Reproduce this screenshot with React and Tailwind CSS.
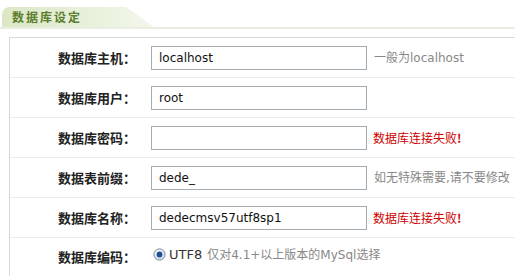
import React from "react";

const cjk = "font-['Noto_Sans_CJK_SC','Noto_Sans',sans-serif]";
const latin = "font-['DejaVu_Sans','Noto_Sans_CJK_SC',sans-serif]";

function Label({ children }) {
  return (
    <div className={`w-[141px] shrink-0 text-right pr-[15px] text-[13px] font-bold text-[#222] ${cjk}`}>
      {children}
    </div>
  );
}

function Input({ value }) {
  return (
    <div className={`w-[216px] h-[24px] shrink-0 border border-[#a5acb2] bg-white flex items-center pl-[7px] text-[12px] text-[#111] ${latin}`}>
      {value}
    </div>
  );
}

function Row({ label, value, hint, error }) {
  return (
    <div className="h-[40px] flex items-center border-b border-[#ececec]">
      <Label>{label}</Label>
      <Input value={value} />
      {hint && (
        <span className={`ml-[7px] text-[12px] text-[#888] ${latin}`}>{hint}</span>
      )}
      {error && (
        <span className={`ml-[6px] text-[12px] text-[#cc0000] ${cjk}`}>
          数据库连接失败<b className="font-bold">!</b>
        </span>
      )}
    </div>
  );
}

export default function App() {
  return (
    <div className="w-[515px] h-[276px] bg-white overflow-hidden">
      <div className="pt-[7px]">
        <div className="relative h-[20px]">
          <div className="absolute left-[2px] top-0 h-[20px] w-[152px] rounded-tl-[8px] bg-gradient-to-r from-[#dbe7c6] via-[#e6efd8] to-[#f3f7ec] [clip-path:polygon(0_0,124px_0,152px_100%,0_100%)]" />
          <div className={`relative pl-[12px] leading-[20px] text-[12px] font-bold tracking-[2px] text-[#5b7d2c] ${cjk}`}>
            数据库设定
          </div>
        </div>
        <div className="h-[2px] bg-[#ecede2]" />
      </div>
      <div className="mt-[8px] ml-[9px] border-l border-t border-[#d9d9d9]">
        <Row label="数据库主机：" value="localhost" hint={<>一般为localhost</>} />
        <Row label="数据库用户：" value="root" />
        <Row label="数据库密码：" value="" error />
        <Row label="数据表前缀：" value="dede_" hint="如无特殊需要,请不要修改" />
        <Row label="数据库名称：" value="dedecmsv57utf8sp1" error />
        <div className="h-[44px] flex items-start">
          <div className="pt-[9px]">
            <Label>数据库编码：</Label>
          </div>
          <div className="pt-[7px] flex items-center">
            <svg width="13" height="13" viewBox="0 0 13 13" className="ml-[2px] mr-[3px]">
              <defs>
                <radialGradient id="rg" cx="40%" cy="35%" r="70%">
                  <stop offset="0%" stopColor="#ffffff" />
                  <stop offset="100%" stopColor="#c9d6e4" />
                </radialGradient>
              </defs>
              <circle cx="6.5" cy="6.5" r="5.6" fill="url(#rg)" stroke="#7b8a9b" strokeWidth="1" />
              <circle cx="6.5" cy="6.5" r="2.9" fill="#1f4f8f" />
            </svg>
            <span className={`text-[13px] text-[#333] ${latin}`}>UTF8</span>
            <span className={`ml-[5px] text-[12px] text-[#888] ${latin}`}>仅对4.1+以上版本的MySql选择</span>
          </div>
        </div>
      </div>
    </div>
  );
}
